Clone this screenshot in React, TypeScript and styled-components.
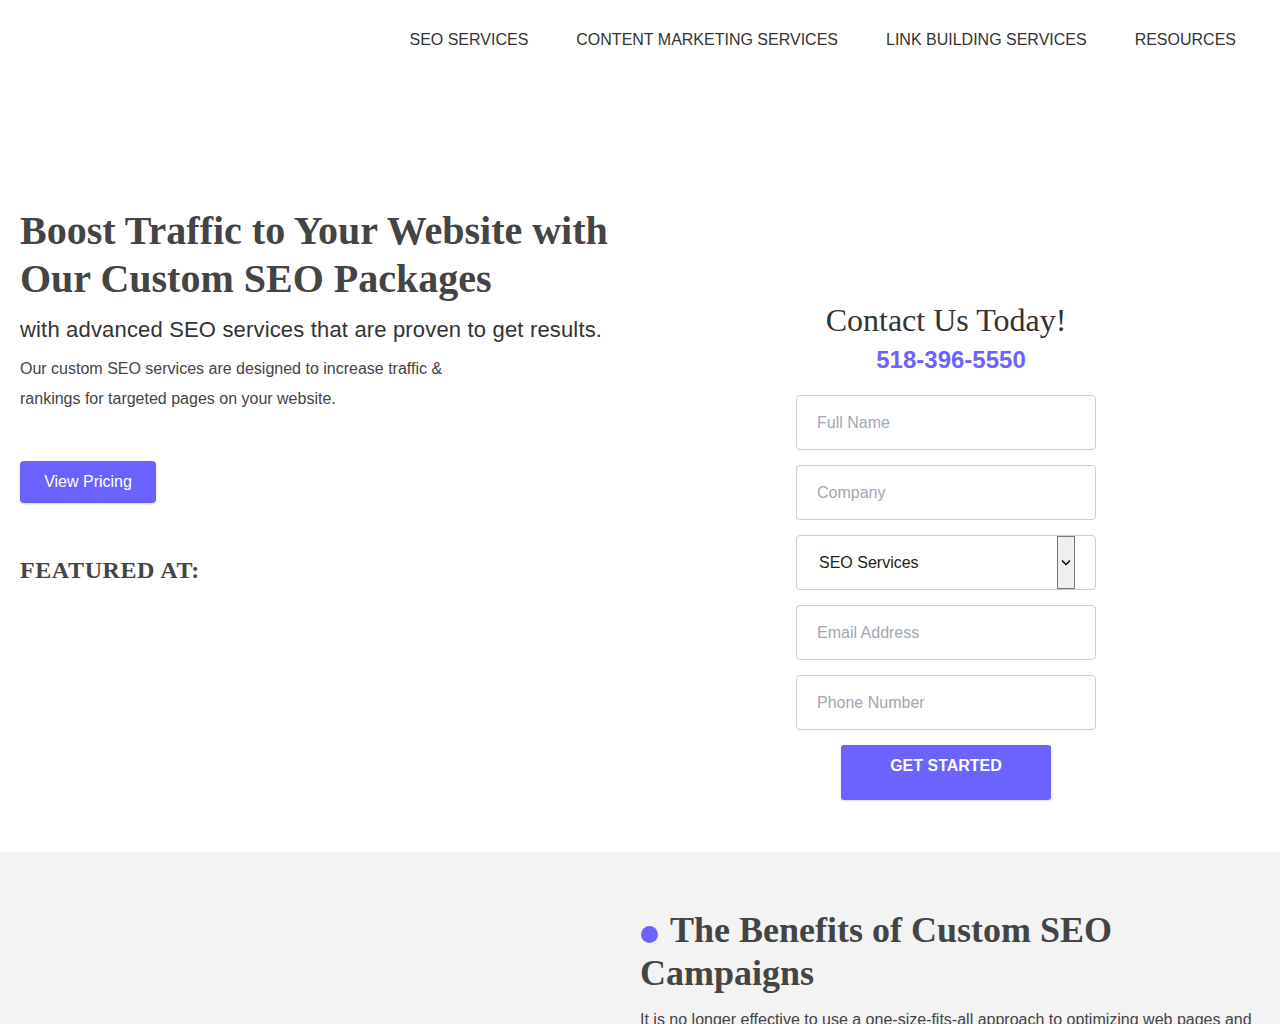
import styled, { createGlobalStyle } from 'styled-components';

const PURPLE = '#6c63ff';

const GlobalStyle = createGlobalStyle`
  html, body { margin: 0; padding: 0; background: #fff; }
  body {
    font-family: 'Liberation Sans', Arial, sans-serif;
    color: #444;
    font-variant-ligatures: none;
  }
  * { box-sizing: border-box; }
`;

const Nav = styled.nav`
  height: 78px;
  display: flex;
  justify-content: flex-end;
  align-items: center;
  gap: 48px;
  padding: 1px 44px 0 0;
`;

const NavLink = styled.a`
  font-size: 16px;
  color: #333;
  text-transform: uppercase;
  text-decoration: none;
  cursor: pointer;
`;

const Hero = styled.section`
  display: grid;
  grid-template-columns: 616px 616px;
  padding: 129px 28px 52px 20px;
`;

const HeroText = styled.div`
  display: flex;
  flex-direction: column;
  align-items: flex-start;
`;

const Title = styled.h1`
  font-family: 'Liberation Serif', 'Times New Roman', serif;
  font-weight: 700;
  font-size: 40px;
  line-height: 48px;
  color: #444;
  margin: 0;
`;

const Subtitle = styled.p`
  font-size: 22px;
  line-height: 26px;
  letter-spacing: 0.17px;
  color: #333;
  margin: 14px 0 0;
`;

const Lead = styled.p`
  font-size: 16px;
  line-height: 30px;
  color: #444;
  max-width: 460px;
  margin: 11px 0 0;
`;

const PrimaryButton = styled.button`
  margin-top: 47px;
  width: 136px;
  height: 42px;
  border: none;
  border-radius: 4px;
  background: ${PURPLE};
  color: #fff;
  font-family: 'Liberation Sans', Arial, sans-serif;
  font-size: 16px;
  box-shadow: 0 1px 2px rgba(0, 0, 0, 0.2);
  cursor: pointer;
`;

const Featured = styled.h3`
  font-family: 'Liberation Serif', 'Times New Roman', serif;
  font-weight: 700;
  font-size: 24px;
  line-height: 29px;
  letter-spacing: 0.6px;
  color: #444;
  margin: 53px 0 0;
`;

const ContactColumn = styled.div`
  display: flex;
  flex-direction: column;
  align-items: center;
  padding: 94px 0 0 4px;
`;

const ContactTitle = styled.h2`
  font-family: 'Liberation Serif', 'Times New Roman', serif;
  font-weight: 400;
  font-size: 32px;
  line-height: 38px;
  color: #333;
  margin: 0;
`;

const Phone = styled.a`
  font-size: 24px;
  line-height: 29px;
  font-weight: 700;
  color: ${PURPLE};
  text-decoration: none;
  margin: 6px 0 0 10px;
`;

const Form = styled.form`
  margin-top: 21px;
  display: flex;
  flex-direction: column;
  align-items: center;
  gap: 15px;
`;

const Field = styled.input`
  width: 300px;
  height: 55px;
  border: 1px solid #ccc;
  border-radius: 4px;
  padding: 0 20px;
  font-family: 'Liberation Sans', Arial, sans-serif;
  font-size: 16px;
  color: #222;
  &::placeholder { color: #a0a8b5; }
`;

const SelectBox = styled.div`
  width: 300px;
  height: 55px;
  border: 1px solid #ccc;
  border-radius: 4px;
  display: flex;
  padding-left: 22px;
  padding-right: 20px;
`;

const Select = styled.select`
  flex: 1;
  appearance: none;
  border: none;
  background: transparent;
  font-family: 'Liberation Sans', Arial, sans-serif;
  font-size: 16px;
  color: #222;
  outline: none;
`;

const ArrowBox = styled.span`
  width: 18px;
  border: 1px solid #767676;
  background: #efefef;
  display: flex;
  align-items: center;
  justify-content: center;
`;

const SubmitButton = styled.button`
  width: 210px;
  height: 55px;
  border: none;
  border-radius: 3px;
  background: ${PURPLE};
  color: #fff;
  font-family: 'Liberation Sans', Arial, sans-serif;
  font-size: 16px;
  font-weight: 700;
  padding: 12px 0 0;
  display: flex;
  justify-content: center;
  align-items: flex-start;
  box-shadow: 0 1px 2px rgba(0, 0, 0, 0.15);
  cursor: pointer;
`;

const Benefits = styled.section`
  background: #f3f3f3;
  display: grid;
  grid-template-columns: 640px 1fr;
  padding: 57px 28px 40px 0;
`;

const BenefitsBody = styled.div`
  grid-column: 2;
`;

const BenefitsTitle = styled.h2`
  font-family: 'Liberation Serif', 'Times New Roman', serif;
  font-weight: 700;
  font-size: 36px;
  line-height: 43px;
  color: #444;
  margin: 0;
`;

const Dot = styled.span`
  display: inline-block;
  width: 17px;
  height: 17px;
  border-radius: 50%;
  background: ${PURPLE};
  margin: 0 12px 0 1px;
  vertical-align: -1px;
`;

const BodyText = styled.p`
  font-size: 16px;
  line-height: 30px;
  color: #444;
  margin: 10px 0 0;
`;

const navItems = ['SEO Services', 'Content Marketing Services', 'Link Building Services', 'Resources'];

export default function App() {
  return (
    <>
      <GlobalStyle />
      <Nav>
        {navItems.map(item => <NavLink key={item}>{item}</NavLink>)}
      </Nav>
      <Hero>
        <HeroText>
          <Title>Boost Traffic to Your Website with Our Custom SEO Packages</Title>
          <Subtitle>with advanced SEO services that are proven to get results.</Subtitle>
          <Lead>Our custom SEO services are designed to increase traffic &amp; rankings for targeted pages on your website.</Lead>
          <PrimaryButton>View Pricing</PrimaryButton>
          <Featured>FEATURED AT:</Featured>
        </HeroText>
        <ContactColumn>
          <ContactTitle>Contact Us Today!</ContactTitle>
          <Phone>518-396-5550</Phone>
          <Form onSubmit={e => e.preventDefault()}>
            <Field placeholder="Full Name" />
            <Field placeholder="Company" />
            <SelectBox>
              <Select defaultValue="seo">
                <option value="seo">SEO Services</option>
                <option value="content">Content Marketing</option>
                <option value="links">Link Building</option>
              </Select>
              <ArrowBox>
                <svg width="10" height="7" viewBox="0 0 10 7">
                  <path d="M1 1.5l4 4 4-4" fill="none" stroke="#111" strokeWidth="1.6" />
                </svg>
              </ArrowBox>
            </SelectBox>
            <Field placeholder="Email Address" />
            <Field placeholder="Phone Number" />
            <SubmitButton type="submit">GET STARTED</SubmitButton>
          </Form>
        </ContactColumn>
      </Hero>
      <Benefits>
        <BenefitsBody>
          <BenefitsTitle><Dot />The Benefits of Custom SEO Campaigns</BenefitsTitle>
          <BodyText>
            It is no longer effective to use a one-size-fits-all approach to optimizing web pages and
            websites. Every business is unique, and a custom SEO campaign targets the keywords and
            audiences that matter most to you.
          </BodyText>
        </BenefitsBody>
      </Benefits>
    </>
  );
}
